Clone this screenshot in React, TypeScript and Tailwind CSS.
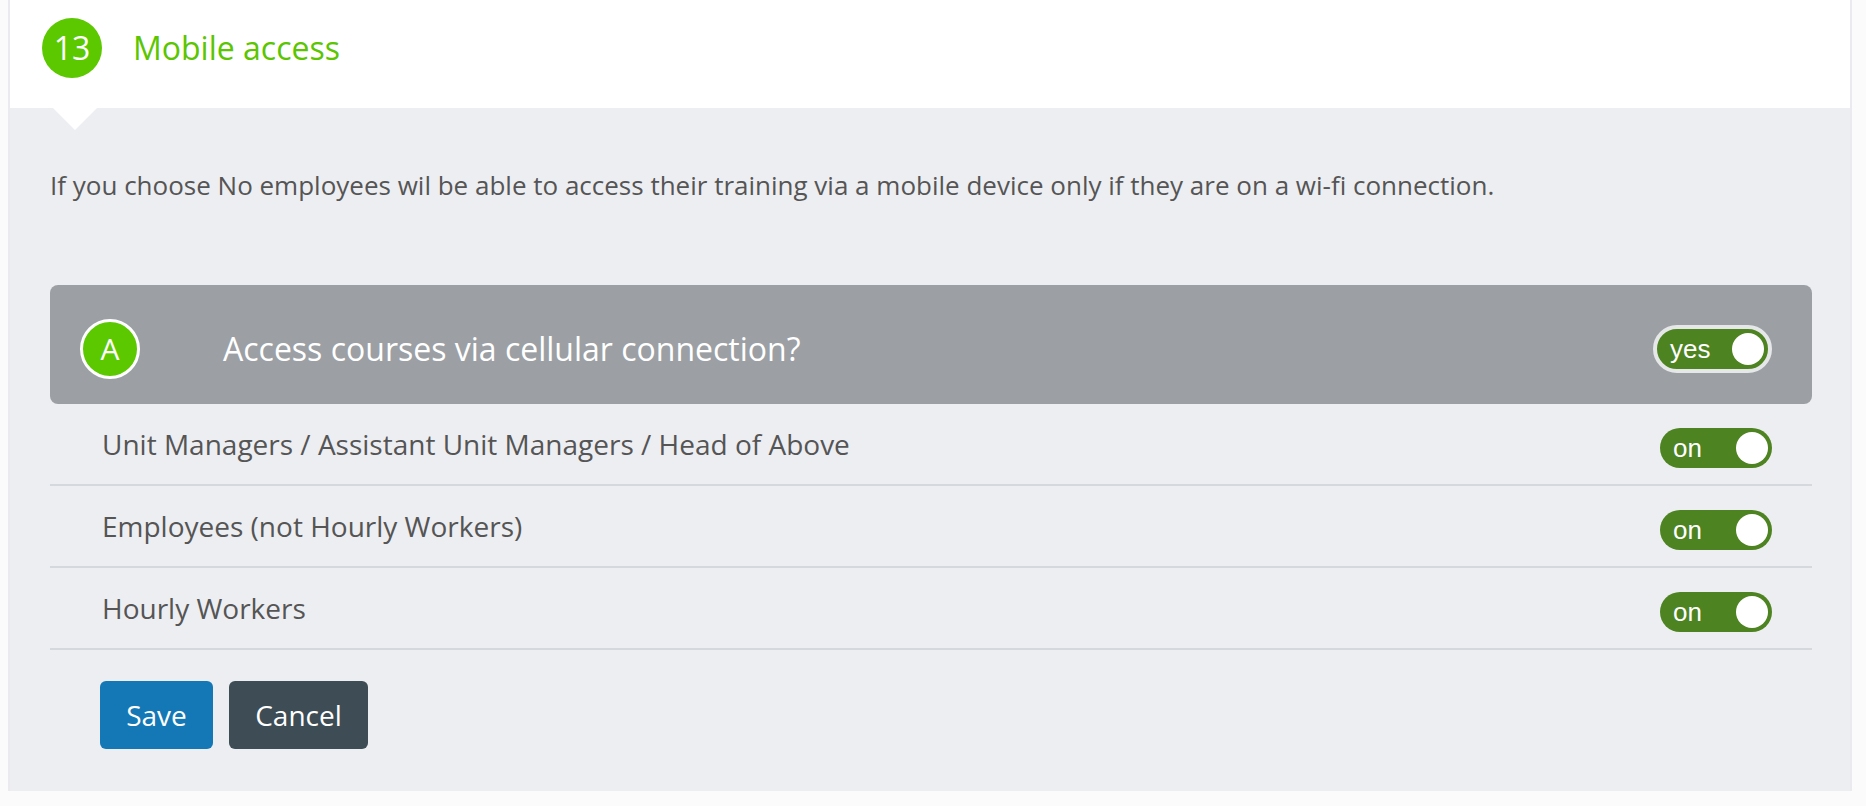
import React from 'react';

type ToggleProps = {
  label: string;
  bordered?: boolean;
};

function Toggle({ label, bordered }: ToggleProps) {
  if (bordered) {
    return (
      <div className="mt-[8px] flex h-[48px] w-[119px] items-center justify-between rounded-full border-[4px] border-[#e6e7e9] bg-[#4e8321] pl-[13px] pr-[4px]">
        <span className="text-[26px] leading-none text-white [font-family:'Liberation_Sans',Arial,sans-serif]">
          {label}
        </span>
        <span className="h-[32px] w-[32px] rounded-full bg-white" />
      </div>
    );
  }
  return (
    <div className="mt-2 flex h-[40px] w-[112px] items-center justify-between rounded-full bg-[#4e8321] pl-[13px] pr-[4px]">
      <span className="text-[26px] leading-none text-white [font-family:'Liberation_Sans',Arial,sans-serif]">
        {label}
      </span>
      <span className="h-[32px] w-[32px] rounded-full bg-white" />
    </div>
  );
}

const groups = [
  'Unit Managers / Assistant Unit Managers / Head of Above',
  'Employees (not Hourly Workers)',
  'Hourly Workers',
];

export default function App() {
  return (
    <div className="min-h-screen bg-[#fbfbfc] pl-[8px] pr-[14px] [font-family:'Open_Sans',sans-serif]">
      <div className="border-x-2 border-[#ebebef]">
        {/* Header */}
        <div className="flex h-[108px] items-start bg-white pl-[32px] pt-[18px]">
          <div className="flex h-[60px] w-[60px] items-center justify-center rounded-full bg-[#5bc800] text-[32px] text-white">
            13
          </div>
          <h2 className="ml-[31px] text-[32px] leading-[60px] text-[#5bc500]">Mobile access</h2>
        </div>

        {/* Body */}
        <div className="relative bg-[#edeef2] pb-[42px] pl-[40px] pr-[38px] pt-[57px]">
          <div className="absolute left-[43px] top-0 h-0 w-0 border-l-[22px] border-r-[22px] border-t-[22px] border-l-transparent border-r-transparent border-t-white" />

          <p className="text-[26px] leading-[40px] text-[#555555]">
            If you choose No employees wil be able to access their training via a mobile device only if they are on a wi-fi connection.
          </p>

          {/* Section A */}
          <div className="mt-[80px] flex h-[119px] items-center justify-between rounded-[8px] bg-[#9ca0a4] pl-[30px] pr-[40px]">
            <div className="mt-[8px] flex items-center">
              <div className="flex h-[60px] w-[60px] items-center justify-center rounded-full border-[3px] border-white bg-[#5bc800] text-[30px] text-white">
                A
              </div>
              <span className="ml-[83px] text-[32px] text-white">Access courses via cellular connection?</span>
            </div>
            <Toggle label="yes" bordered />
          </div>

          {groups.map((g) => (
            <div
              key={g}
              className="flex h-[82px] items-center justify-between border-b-2 border-[#d5d9dd] pl-[52px] pr-[40px]"
            >
              <span className="text-[28px] leading-[40px] text-[#555555]">{g}</span>
              <Toggle label="on" />
            </div>
          ))}

          <div className="ml-[50px] mt-[31px] flex gap-[16px]">
            <button className="h-[68px] w-[113px] rounded-[6px] bg-[#1378b5] text-[28px] text-white">Save</button>
            <button className="h-[68px] w-[139px] rounded-[6px] bg-[#3d4c55] text-[28px] text-white">Cancel</button>
          </div>
        </div>
      </div>
    </div>
  );
}
